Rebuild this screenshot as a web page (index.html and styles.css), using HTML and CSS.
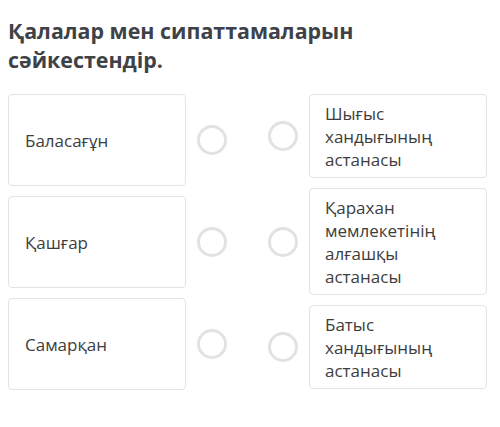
FILE: index.html
```html
<!DOCTYPE html>
<html lang="kk">
<head>
    <meta charset="utf-8">
    <title>Сәйкестендір</title>
    <link rel="stylesheet" href="styles.css">
</head>
<body>
    <h1 class="question">Қалалар мен сипаттамаларын сәйкестендір.</h1>

    <div class="board">
        <!-- сол жақ -->
        <div class="col">
            <div class="item">
                <div class="card card-left">Баласағұн</div>
                <span class="dot"></span>
            </div>
            <div class="item">
                <div class="card card-left">Қашғар</div>
                <span class="dot"></span>
            </div>
            <div class="item">
                <div class="card card-left">Самарқан</div>
                <span class="dot"></span>
            </div>
        </div>

        <!-- оң жақ -->
        <div class="col">
            <div class="item">
                <span class="dot"></span>
                <div class="card card-right">Шығыс хандығының астанасы</div>
            </div>
            <div class="item">
                <span class="dot"></span>
                <div class="card card-right">Қарахан мемлекетінің алғашқы астанасы</div>
            </div>
            <div class="item">
                <span class="dot"></span>
                <div class="card card-right">Батыс хандығының астанасы</div>
            </div>
        </div>
    </div>
</body>
</html>
```

FILE: styles.css
```css
body {
    margin: 0;
    padding: 16px 13px 0 8px;
    background: #fff;
    font-family: "Open Sans", "Noto Sans", sans-serif;
    color: #3b3b3b;
}

.question {
    margin: 0 0 20px 0;
    font-size: 21.4px;
    line-height: 29px;
    font-weight: 700;
    color: #3e4248;
    max-width: 400px;
}

.board {
    display: flex;
    justify-content: space-between;
}

.col {
    display: flex;
    flex-direction: column;
    gap: 10px;
}

.item {
    display: flex;
    align-items: center;
    gap: 11px;
}

/* карточкалар */
.card {
    box-sizing: border-box;
    width: 178px;
    border: 1px solid #e3e3e3;
    border-radius: 4px;
    font-size: 17px;
    line-height: 23px;
    color: #3d3d3d;
}

.card-left {
    height: 92px;
    padding: 0 16px;
    display: flex;
    align-items: center;
}

.card-right {
    padding: 7px 32px 6px 15px;
}

.dot {
    box-sizing: border-box;
    width: 30px;
    height: 30px;
    border: 3px solid #e2e2e2;
    border-radius: 50%;
    flex: none;
}
```
